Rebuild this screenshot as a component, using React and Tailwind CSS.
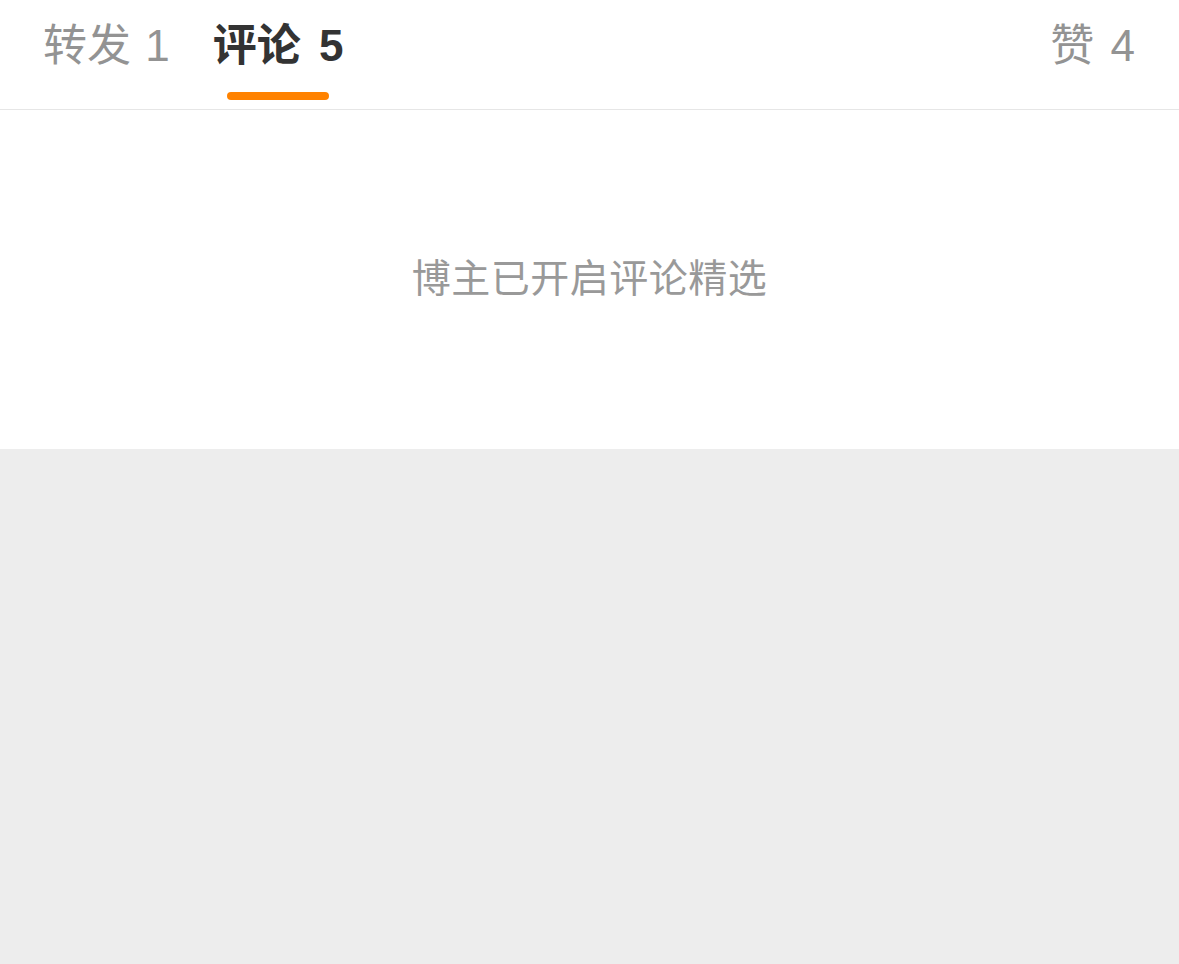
export default function App() {
  const font = { fontFamily: '"Liberation Sans", "Noto Sans CJK SC", sans-serif' };

  return (
    <div className="w-[1179px] h-[964px] flex flex-col bg-[#ededed]" style={font}>
      {/* tabs */}
      <div className="h-[110px] bg-white border-b border-[#e6e6e6] flex pl-[43px] pr-[44px]">
        <div className="flex flex-col items-center pt-[18px]">
          <span className="h-[56px] leading-[56px] text-[44px] text-[#939393] [word-spacing:2px]">转发 1</span>
        </div>
        <div className="flex flex-col items-center pt-[18px] ml-[43px]">
          <span className="h-[56px] leading-[56px] text-[44px] font-bold text-[#333333] [word-spacing:6px]">评论 5</span>
          <span className="mt-[18px] w-[102px] h-[8px] rounded-full bg-[#ff8200]"></span>
        </div>
        <div className="flex flex-col items-center pt-[18px] ml-auto">
          <span className="h-[56px] leading-[56px] text-[44px] text-[#939393] [word-spacing:4px]">赞 4</span>
        </div>
      </div>

      {/* empty state */}
      <div className="h-[339px] bg-white flex items-center justify-center">
        <span className="text-[39px] tracking-[0.5px] text-[#999999]">博主已开启评论精选</span>
      </div>
    </div>
  );
}
